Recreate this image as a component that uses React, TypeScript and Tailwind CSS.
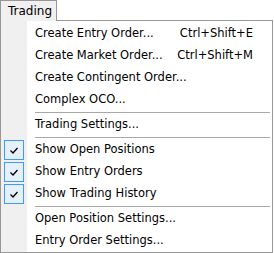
import React from "react";

type Item =
  | { type: "item"; label: string; shortcut?: string; checked?: boolean }
  | { type: "sep" };

const items: Item[] = [
  { type: "item", label: "Create Entry Order...", shortcut: "Ctrl+Shift+E" },
  { type: "item", label: "Create Market Order...", shortcut: "Ctrl+Shift+M" },
  { type: "item", label: "Create Contingent Order..." },
  { type: "item", label: "Complex OCO..." },
  { type: "sep" },
  { type: "item", label: "Trading Settings..." },
  { type: "sep" },
  { type: "item", label: "Show Open Positions", checked: true },
  { type: "item", label: "Show Entry Orders", checked: true },
  { type: "item", label: "Show Trading History", checked: true },
  { type: "sep" },
  { type: "item", label: "Open Position Settings..." },
  { type: "item", label: "Entry Order Settings..." },
];

function Check() {
  return (
    <div className="w-[20px] h-[20px] border border-[#3d9bff] bg-[#e5f0fb] flex items-center justify-center">
      <svg width="8" height="7" viewBox="0 0 8 7">
        <path d="M0.5 3.5 L3 6 L7.5 1" fill="none" stroke="#000" strokeWidth="1.3" />
      </svg>
    </div>
  );
}

export default function App() {
  return (
    <div
      className="w-[274px] h-[253px] bg-white text-black text-[11.5px]"
      style={{ fontFamily: '"DejaVu Sans", Tahoma, sans-serif' }}
    >
      <div className="flex h-[21px]">
        <div className="w-[57px] h-[21px] border-l border-t border-r border-[#979797] bg-[#f0f0f0] pl-[7px] pt-[3px] text-[12px] leading-[15px]">
          Trading
        </div>
        <div className="w-[216px] border-b border-[#979797]" />
      </div>
      <div className="w-[273px] border-l border-r border-b border-[#979797] flex relative">
        <div className="absolute left-0 top-0 bottom-0 w-[26px] bg-[#f0f0f0]" />
        <div className="relative flex flex-col w-full pt-[2px]">
          {items.map((it, i) =>
            it.type === "sep" ? (
              <div key={i} className="h-[3px] flex items-center pl-[34px] pr-[2px]">
                <div className="h-px w-full bg-[#a8a8a8]" />
              </div>
            ) : (
              <div key={i} className="h-[22px] flex items-center">
                <div className="w-[34px] pl-[3px] flex items-center">
                  {it.checked ? <Check /> : null}
                </div>
                <div className="flex-1">{it.label}</div>
                {it.shortcut ? (
                  <div className="pr-[19px]">{it.shortcut}</div>
                ) : null}
              </div>
            )
          )}
        </div>
      </div>
    </div>
  );
}
